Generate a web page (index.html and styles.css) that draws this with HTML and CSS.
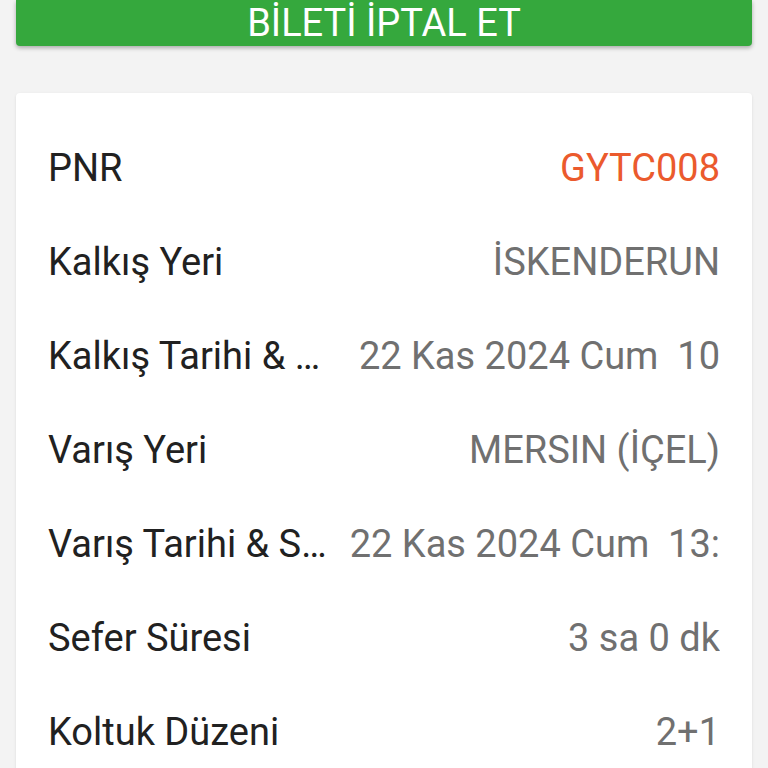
FILE: index.html
```html
<!DOCTYPE html>
<html lang="tr">
<head>
  <meta charset="UTF-8" />
  <meta name="viewport" content="width=device-width, initial-scale=1.0"/>
  <title>Bilet Detayı</title>
  <link rel="stylesheet" href="styles.css">
</head>
<body>
  <div class="page">
    <button class="cancel-btn">BİLETİ İPTAL ET</button>

    <div class="ticket-card">
      <div class="info-row">
        <div class="info-label">PNR</div>
        <div class="info-value pnr">GYTC008</div>
      </div>
      <div class="info-row">
        <div class="info-label">Kalkış Yeri</div>
        <div class="info-value">İSKENDERUN</div>
      </div>
      <div class="info-row">
        <div class="info-label">Kalkış Tarihi &amp; Saati</div>
        <div class="info-value">22 Kas 2024 Cum  10</div>
      </div>
      <div class="info-row">
        <div class="info-label">Varış Yeri</div>
        <div class="info-value">MERSIN (İÇEL)</div>
      </div>
      <div class="info-row">
        <div class="info-label">Varış Tarihi &amp; Saati</div>
        <div class="info-value">22 Kas 2024 Cum  13:</div>
      </div>
      <div class="info-row">
        <div class="info-label">Sefer Süresi</div>
        <div class="info-value">3 sa 0 dk</div>
      </div>
      <div class="info-row">
        <div class="info-label">Koltuk Düzeni</div>
        <div class="info-value">2+1</div>
      </div>
    </div>
  </div>
</body>
</html>
```

FILE: styles.css
```css
body {
  margin: 0;
  font-family: Roboto, 'Noto Sans', sans-serif;
  background-color: #f3f3f3;
  overflow: hidden;
}
.page {
  padding: 0 16px;
}
.cancel-btn {
  display: block;
  width: 100%;
  height: 46px;
  padding: 0;
  border: none;
  border-radius: 0 0 4px 4px;
  background-color: #35a83d;
  color: #fff;
  font-family: Roboto, sans-serif;
  font-size: 38px;
  line-height: 46px;
  box-shadow: 0 2px 4px rgba(0,0,0,0.3);
}
.ticket-card {
  margin-top: 47px;
  background: white;
  border-radius: 4px;
  padding: 28px 32px;
  box-shadow: 0 1px 3px rgba(0,0,0,0.1);
}
.info-row {
  display: flex;
  align-items: center;
  height: 94px;
  font-size: 38px;
}
.info-label {
  width: 290px;
  flex-shrink: 0;
  color: #212121;
  white-space: nowrap;
  overflow: hidden;
  text-overflow: ellipsis;
}
.info-value {
  flex: 1;
  text-align: right;
  color: #707070;
  white-space: pre;
  overflow: hidden;
}
.info-value.pnr {
  color: #eb5a2d;
}
```
